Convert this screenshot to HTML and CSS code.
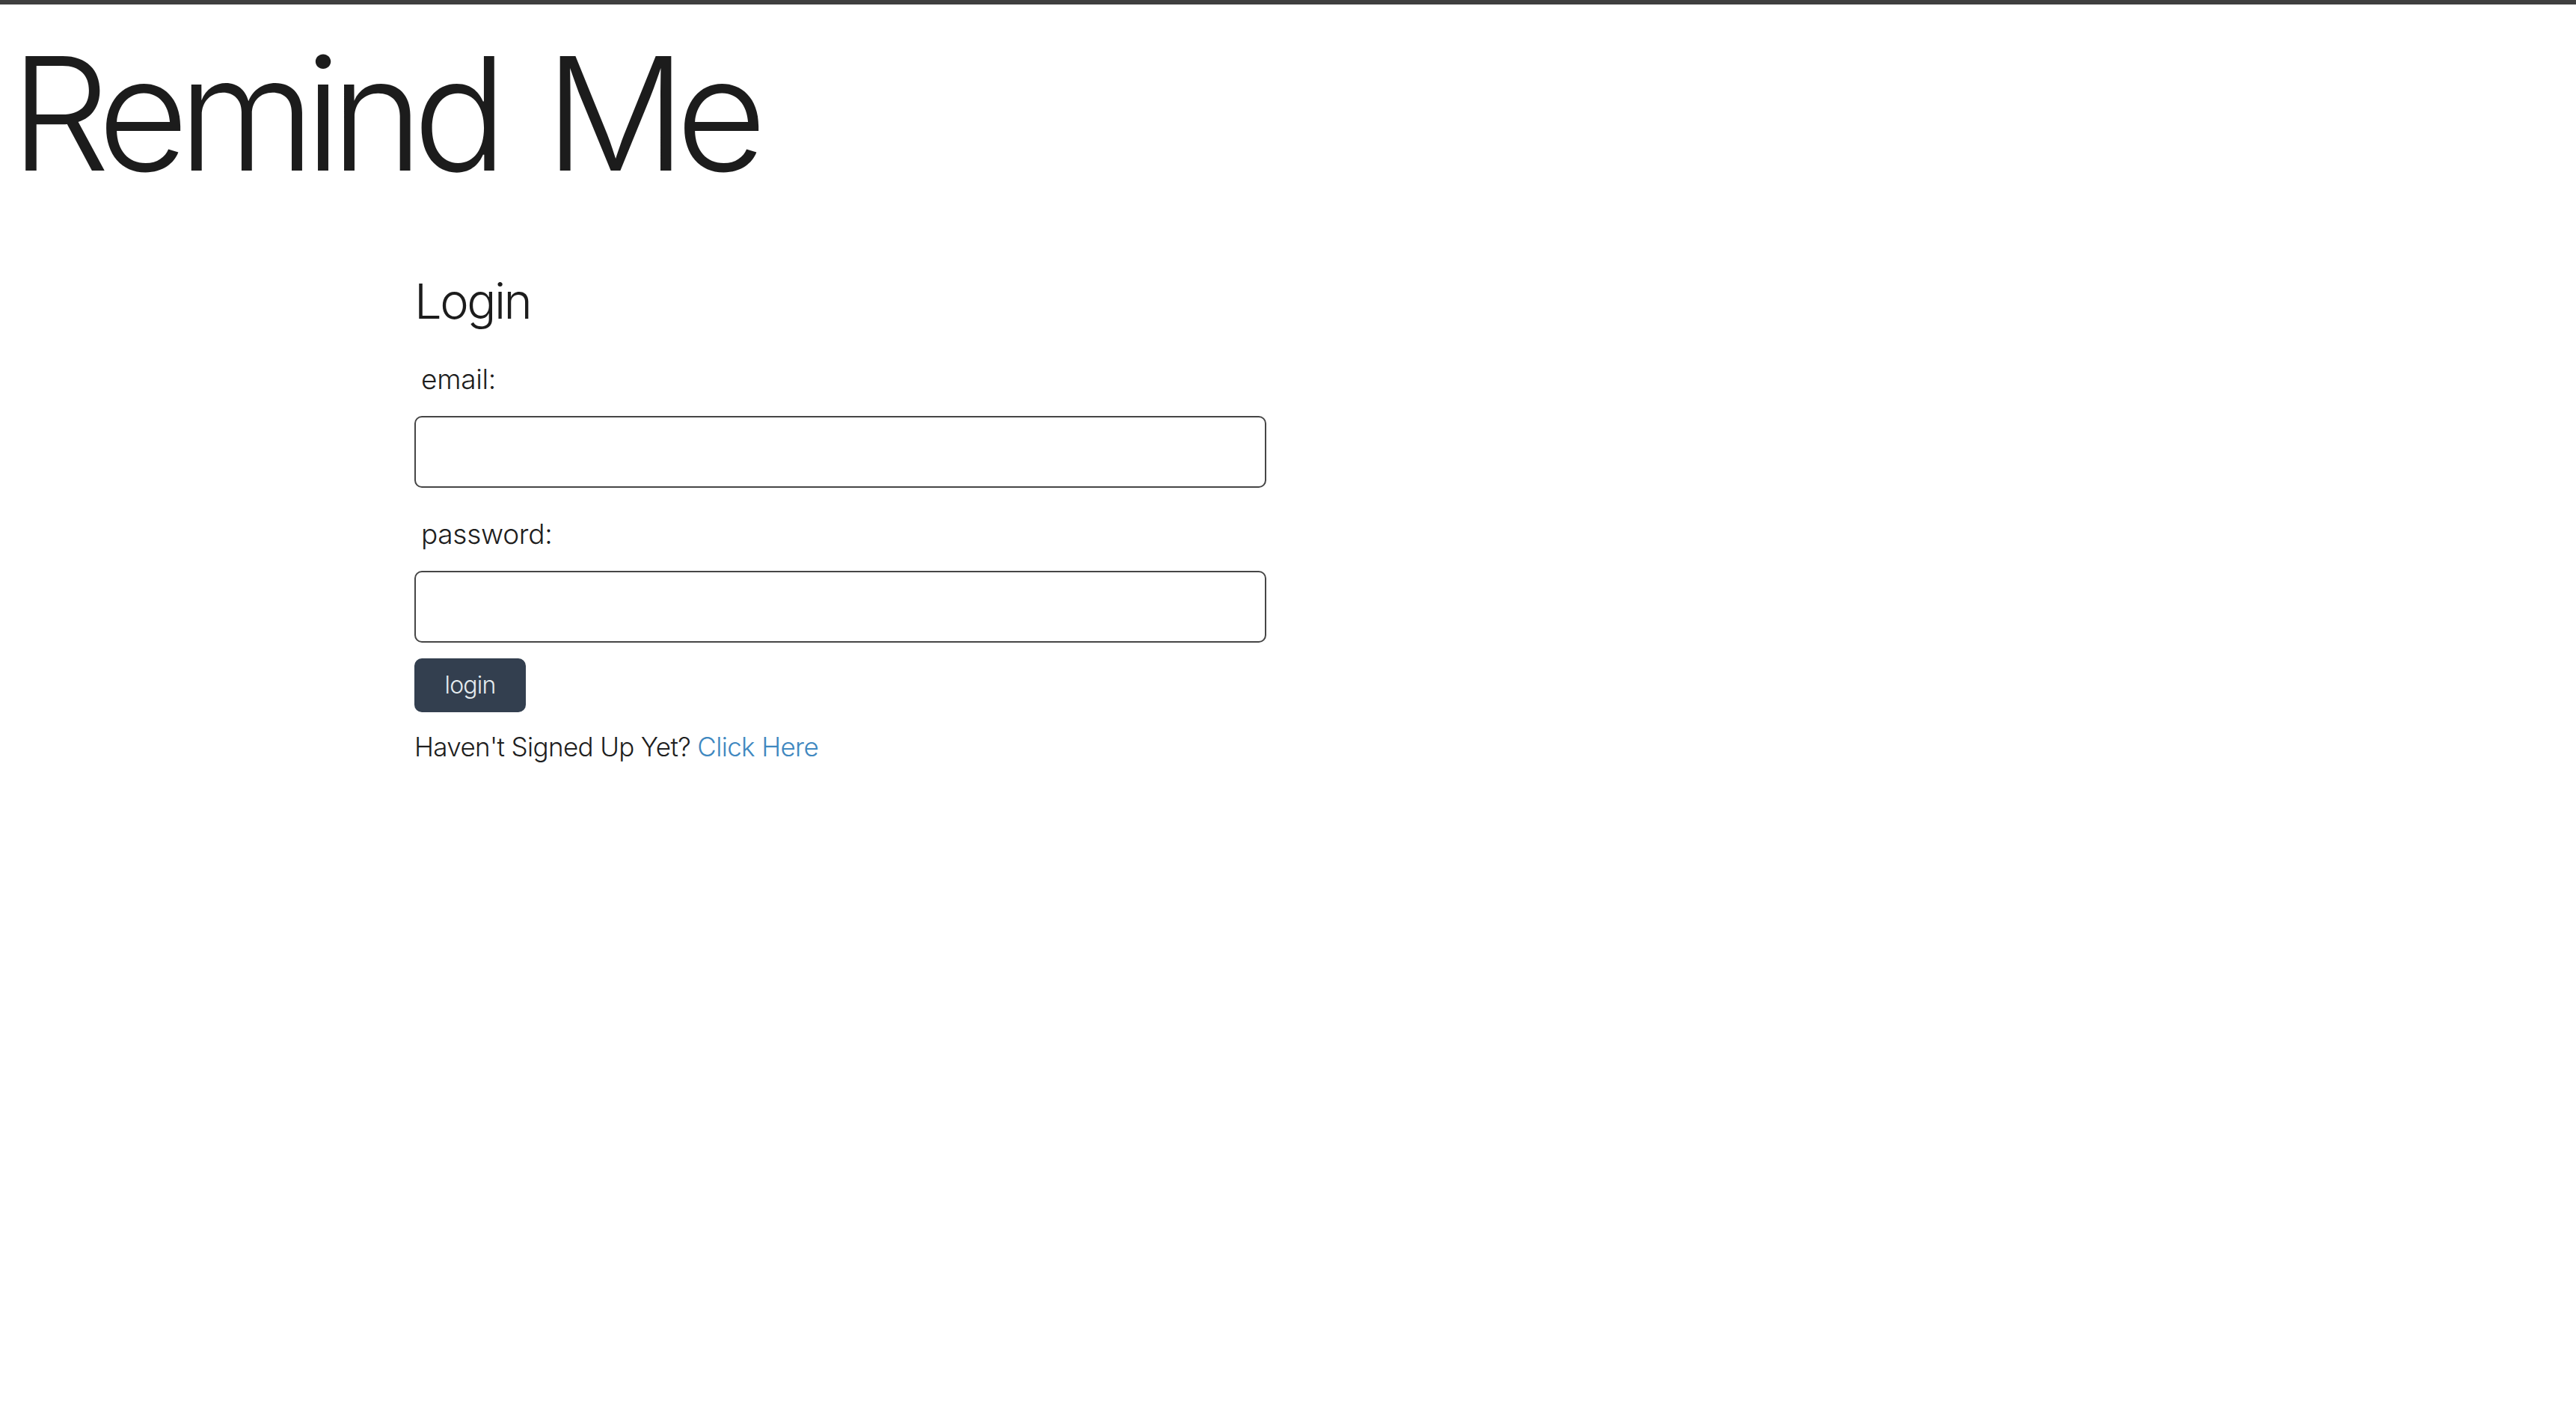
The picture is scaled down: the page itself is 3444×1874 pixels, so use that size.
FILE: index.html
```html
<!DOCTYPE html>
<html lang="en">
<head>
<meta charset="utf-8">
<title>Remind Me</title>
<link rel="stylesheet" href="styles.css">
</head>
<body>
<header class="site-header">
  <h1 class="site-title">Remind Me</h1>
</header>
<main class="login">
  <h2 class="login-title">Login</h2>
  <form class="login-form">
    <div class="field">
      <label class="field-label" for="email">email:</label>
      <input class="field-input" id="email" type="email">
    </div>
    <div class="field">
      <label class="field-label" for="password">password:</label>
      <input class="field-input" id="password" type="password">
    </div>
    <button class="login-button" type="button">login</button>
  </form>
  <p class="signup">Haven't Signed Up Yet? <a class="signup-link" href="#">Click Here</a></p>
</main>
</body>
</html>
```

FILE: styles.css
```css
html, body {
  margin: 0;
  padding: 0;
  background: #ffffff;
}

body {
  border-top: 6px solid #3f3f3f;
  font-family: Inter, "Noto Sans", sans-serif;
  font-weight: 300;
  color: #1e1e1e;
}

.site-header {
  padding-left: 14px;
}

.site-title {
  margin: 41px 0 0 0;
  font-size: 210px;
  line-height: 210px;
  font-weight: 300;
  color: #1c1c1c;
  letter-spacing: -14px;
  word-spacing: 19px;
}

.login {
  margin: 106px 0 0 554px;
  width: 1139px;
}

.login-title {
  margin: 0;
  font-size: 65px;
  line-height: 80px;
  font-weight: 300;
  color: #1c1c1c;
  letter-spacing: -2.5px;
}

.login-form {
  margin-top: 41px;
  display: flex;
  flex-direction: column;
  align-items: flex-start;
}

.field {
  display: flex;
  flex-direction: column;
  width: 100%;
  margin-bottom: 39px;
}

.field + .field {
  margin-bottom: 21px;
}

.field-label {
  display: block;
  padding-left: 9px;
  font-size: 37px;
  line-height: 45px;
  margin-bottom: 27px;
  color: #1e1e1e;
  letter-spacing: -0.3px;
}

.field-input {
  box-sizing: border-box;
  width: 100%;
  height: 96px;
  border: 2px solid #464646;
  border-radius: 10px;
  background: #ffffff;
  font-family: inherit;
  font-size: 35px;
  padding: 0 16px;
  outline: none;
}

.login-button {
  box-sizing: border-box;
  width: 149px;
  height: 72px;
  border: none;
  border-radius: 10px;
  background: #333f4f;
  color: #e4ebee;
  font-family: inherit;
  font-weight: 300;
  font-size: 32px;
  line-height: 72px;
  letter-spacing: -0.8px;
  padding: 0;
  cursor: pointer;
}

.signup {
  margin: 25px 0 0 0;
  font-size: 35px;
  line-height: 42px;
  color: #1e1e1e;
  letter-spacing: -0.65px;
}

.signup-link {
  color: #3f88c0;
  text-decoration: none;
}
```
